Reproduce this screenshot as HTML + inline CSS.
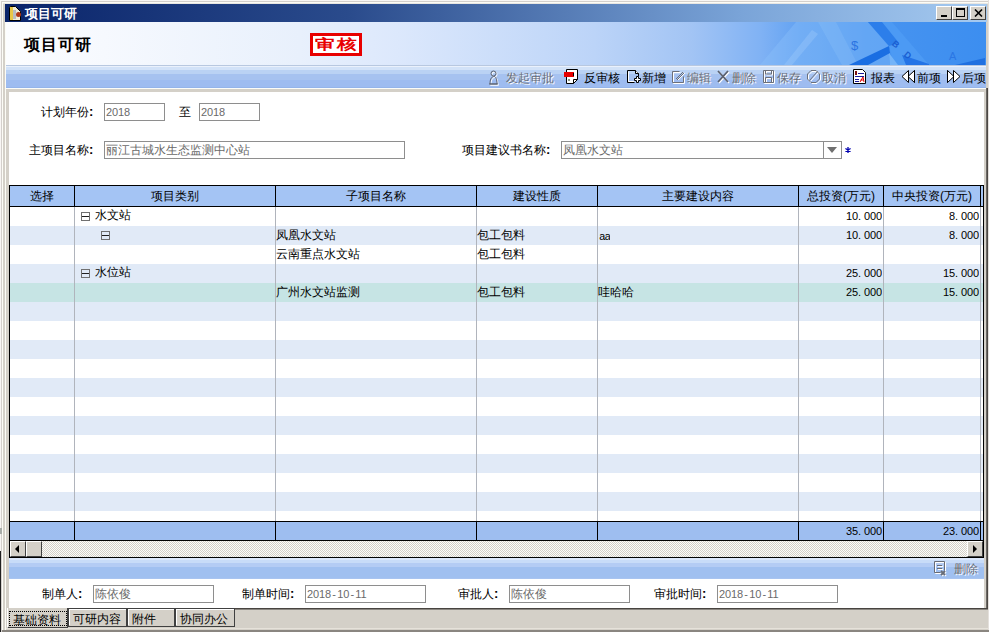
<!DOCTYPE html>
<html><head><meta charset="utf-8">
<style>
*{margin:0;padding:0;box-sizing:border-box}
html,body{width:989px;height:632px;overflow:hidden;background:#d4d0c8;font-family:"Liberation Sans",sans-serif;font-size:12px;color:#000}
.a{position:absolute;white-space:nowrap;overflow:hidden}
.t{position:absolute;white-space:nowrap;font-size:12px;line-height:12px;height:13px}
.num{font-family:"Liberation Mono",monospace;font-size:12px;letter-spacing:-1.2px}
.inp{position:absolute;border:1px solid #8e8e8e;background:#fff;color:#6a6a6a;overflow:hidden;white-space:nowrap}
#title{left:5px;top:4px;width:982px;height:18px;background:linear-gradient(to right,#0a246a 0%,#2a4b8c 35%,#7aa4d8 75%,#a6caf0 100%)}
#hdr{left:6px;top:22px;width:980px;height:43px;background:linear-gradient(to right,#fcfdff 0%,#f6f9fe 10%,#e8f0fc 30%,#dce8fc 40%,#bcd4f8 60%,#a2c4f4 70%,#80b2f4 77%,#62a2f2 81%,#4894f0 88%,#3c8ef0 100%)}
#tb{left:6px;top:65px;width:980px;height:23px;background:linear-gradient(to bottom,#b8c8e0 0 1px,#eaf1fc 1px 2px,#d2e2f8 2px 5px,#bad2f4 5px 9px,#a6c2f0 9px 15px,#9ebcf0 15px 22px,#94b4ea 22px 23px)}
#panel{left:9px;top:92px;width:975px;height:516px;background:#fff}
.nm{font-family:"Liberation Sans",sans-serif;font-size:11px;letter-spacing:-0.1px}
.nm i{font-style:normal;letter-spacing:2.9px}
.nm i.d{letter-spacing:1.2px;padding-left:1.2px}
.dis{color:#6a6e78;text-shadow:1px 1px 0 #fff}
</style></head><body>
<!-- window frame -->
<div class="a" style="left:0;top:0;width:989px;height:632px;background:#d4d0c8"></div>
<div class="a" style="left:0;top:0;width:989px;height:1px;background:#f8f6f4"></div>
<div class="a" style="left:0;top:0;width:1px;height:632px;background:#f8f6f4"></div>
<div class="a" style="left:1px;top:1px;width:988px;height:1px;background:#d4d0cc"></div>
<div class="a" style="left:1px;top:1px;width:1px;height:631px;background:#d4d0cc"></div>
<div class="a" style="left:2px;top:2px;width:987px;height:1px;background:#fcfcf6"></div>
<div class="a" style="left:2px;top:2px;width:1px;height:630px;background:#fcfcf6"></div>
<div class="a" style="left:3px;top:3px;width:985px;height:1px;background:#e8e6e2"></div>
<div class="a" style="left:5px;top:22px;width:1px;height:608px;background:#fcfcf6"></div>
<div class="a" style="left:0px;top:551px;width:1px;height:81px;background:#202020"></div><div class="a" style="left:0px;top:528px;width:2px;height:6px;background:#a8aca8"></div>
<div class="a" style="left:988px;top:0px;width:1px;height:632px;background:#e4e0dc"></div>
<div class="a" style="left:986px;top:88px;width:1px;height:522px;background:#6c6864"></div>
<div class="a" style="left:987px;top:88px;width:1px;height:522px;background:#4c4844"></div>

<!-- title bar -->
<div class="a" id="title"></div>
<svg class="a" style="left:8px;top:5px" width="14" height="16"><path d="M1.5 2.5q0-1 1-1h5l5 5v9h-11z" fill="#f0ecd8" stroke="#000"/><rect x="2" y="2" width="3" height="13" fill="#e8c848"/><rect x="5" y="5" width="3" height="9" fill="#b8bcc0"/><circle cx="10.5" cy="9.5" r="2.5" fill="#b03818"/></svg>
<div class="t" style="left:25px;top:7px;color:#fff;font-weight:900;font-size:13px;line-height:13px;height:14px">项目可研</div>
<!-- title buttons -->
<div class="a" style="left:936px;top:6px;width:16px;height:14px;background:#d4d0c8;border-top:1px solid #fff;border-left:1px solid #fff;border-right:1px solid #404040;border-bottom:1px solid #404040"><div class="a" style="left:4px;top:8px;width:6px;height:2px;background:#000"></div></div>
<div class="a" style="left:952px;top:6px;width:16px;height:14px;background:#d4d0c8;border-top:1px solid #fff;border-left:1px solid #fff;border-right:1px solid #404040;border-bottom:1px solid #404040"><div class="a" style="left:3px;top:1px;width:9px;height:9px;border:1px solid #000;border-top-width:2px"></div></div>
<div class="a" style="left:970px;top:6px;width:16px;height:14px;background:#d4d0c8;border-top:1px solid #fff;border-left:1px solid #fff;border-right:1px solid #404040;border-bottom:1px solid #404040">
 <svg class="a" style="left:3px;top:2px" width="9" height="8"><path d="M1 0.5L8 7.5M8 0.5L1 7.5" stroke="#000" stroke-width="1.6"/></svg></div>

<!-- header -->
<div class="a" id="hdr"></div>
<svg class="a" style="left:6px;top:22px" width="980" height="43">
<polygon points="754,43 790,0 862,0 883,24 884,43" fill="#8cc0fa" opacity="0.4"/>
<polygon points="778,43 806,8 812,12 786,43" fill="#a8d0fc" opacity="0.3"/>
<polygon points="812,0 830,0 852,43 836,43" fill="#a8d0fc" opacity="0.18"/>
<polygon points="862,0 886,0 923,43 888,43 883,24" fill="#4c9af4"/>
<polygon points="862,0 876,0 893,21 883,24" fill="#2c7eea"/>
<polygon points="896,33 923,42 923,43 900,43" fill="#2474e6"/>
<polygon points="843,43 883,24 884,31 862,43" fill="#1a6ee2"/>
<polygon points="883,31 884,43 892,43" fill="#74b4f8"/>
<polygon points="949,43 979,36 979,43" fill="#2070e0"/>
<text x="845" y="28" font-family="Liberation Sans" font-size="13" fill="#2a74e2">$</text>
<text x="887" y="26" font-family="Liberation Sans" font-size="9" font-weight="bold" fill="#1a5ed2" transform="rotate(40 891 22)">B</text>
<text x="899" y="37" font-family="Liberation Sans" font-size="9" font-weight="bold" fill="#1a5ed2" transform="rotate(40 903 33)">D</text>
<text x="943" y="38" font-family="Liberation Sans" font-size="11" fill="#2a76e4">A</text>
</svg>
<div class="t" style="left:24px;top:37px;font-size:16px;line-height:16px;height:17px;font-weight:bold;letter-spacing:1px">项目可研</div>
<div class="a" style="left:310px;top:33px;width:52px;height:23px;border:3px solid #e80000;background:#fff"></div>
<div class="a" style="left:315px;top:36px;width:14px;height:17px;color:#e80000;font-weight:bold;font-size:14px;line-height:17px;transform:scaleX(1.4);transform-origin:0 0;overflow:visible">审</div>
<div class="a" style="left:337px;top:36px;width:14px;height:17px;color:#e80000;font-weight:bold;font-size:14px;line-height:17px;transform:scaleX(1.4);transform-origin:0 0;overflow:visible">核</div>

<!-- toolbar -->
<div class="a" id="tb"></div>
<div class="a" style="left:6px;top:88px;width:980px;height:1px;background:#fcfcf8"></div>


<!-- toolbar items -->
<svg class="a" style="left:488px;top:70px" width="13" height="16"><g fill="none" stroke="#fff" stroke-width="1" transform="translate(1,1)"><circle cx="5.5" cy="3.5" r="2.5"/><path d="M2 14c0-4 1-7 3.5-7.5S9 10 9 14z"/><path d="M1 14h9"/></g><g fill="none" stroke="#5c6270" stroke-width="1"><circle cx="5.5" cy="3.5" r="2.5"/><path d="M2 14c0-4 1-7 3.5-7.5S9 10 9 14z"/><path d="M1 14h9"/></g></svg>
<div class="t dis" style="left:506px;top:72px">发起审批</div>
<svg class="a" style="left:563px;top:69px" width="16" height="16"><path d="M3.5 0.5h11v10l-4 4h-7z" fill="#fff" stroke="#000"/><path d="M10.5 14.5v-4h4" fill="none" stroke="#000"/><rect x="1" y="3" width="10" height="5" fill="#e60000"/><rect x="10" y="4" width="1" height="3" fill="#000"/><rect x="5" y="10" width="2" height="2" fill="#8a9a8a"/></svg>
<div class="t" style="left:584px;top:72px">反审核</div>
<svg class="a" style="left:626px;top:69px" width="16" height="16"><path d="M1.5 1.5h8l3 3v3M8.5 13.5h-7v-12" fill="none" stroke="#000"/><path d="M2.5 2.5v10h6" fill="none" stroke="#fff"/><path d="M9.5 1.5v3h3" fill="none" stroke="#000"/><path d="M10 2l2 2h-2z" fill="#fff"/><path d="M10.5 7.5h2v2h2v2h-2v2h-2v-2h-2v-2h2z" fill="#fff" stroke="#000"/></svg>
<div class="t" style="left:642px;top:72px">新增</div>
<svg class="a" style="left:671px;top:69px" width="16" height="16"><g transform="translate(1,1)" stroke="#fff" fill="none"><path d="M1.5 2.5h7M1.5 2.5v11h11v-6"/><path d="M6 10l7-7"/></g><g stroke="#6c707a" fill="none"><path d="M1.5 2.5h7M1.5 2.5v11h11v-6"/><path d="M5 10l7-7M6 11l7-7"/></g></svg>
<div class="t dis" style="left:687px;top:72px">编辑</div>
<svg class="a" style="left:717px;top:70px" width="14" height="14"><g transform="translate(1,1)" stroke="#fff" stroke-width="1.6"><path d="M1 1l10 11M11 1L1 12"/></g><g stroke="#5c6270" stroke-width="1.8"><path d="M1 1l10 11M11 1L1 12"/></g></svg>
<div class="t dis" style="left:732px;top:72px">删除</div>
<svg class="a" style="left:763px;top:70px" width="14" height="14"><g transform="translate(1,1)" stroke="#fff" fill="none"><path d="M0.5 0.5h10v12h-10z M2.5 7.5h6v5h-6z M2.5 1v3h6v-3"/></g><g stroke="#6c707a" fill="none"><path d="M0.5 0.5h10v12h-10z M2.5 7.5h6v5h-6z M2.5 1v3h6v-3"/></g></svg>
<div class="t dis" style="left:777px;top:72px">保存</div>
<svg class="a" style="left:807px;top:70px" width="15" height="14"><g transform="translate(1,1)" stroke="#fff" fill="none"><path d="M4 0.5h5l3.5 3.5v5l-3.5 3.5h-5L0.5 9v-5z M2.5 10.5l8-9"/></g><g stroke="#6c707a" fill="none"><path d="M4 0.5h5l3.5 3.5v5l-3.5 3.5h-5L0.5 9v-5z M2.5 10.5l8-9"/></g></svg>
<div class="t dis" style="left:822px;top:72px">取消</div>
<svg class="a" style="left:852px;top:69px" width="16" height="16"><path d="M1.5 0.5h9l3 3v11h-12z" fill="#fff" stroke="#000"/><rect x="3" y="2" width="2" height="4" fill="#7a1010"/><path d="M6 4.5h6M3 7.5h9M3 10.5h4M3 12.5h4" stroke="#1a1a9a" stroke-width="1.2"/><path d="M8 13l3-5 1 5M8.5 11h3" stroke="#e00000" fill="none"/></svg>
<div class="t" style="left:871px;top:72px">报表</div>
<svg class="a" style="left:901px;top:70px" width="16" height="13"><path d="M7.5 0.5L1 6.5l6.5 6zM13.5 0.5L7 6.5l6.5 6z" fill="#fff" stroke="#000"/><path d="M13.5 0.5v12" stroke="#000"/></svg>
<div class="t" style="left:917px;top:72px">前项</div>
<svg class="a" style="left:946px;top:70px" width="16" height="13"><path d="M1.5 0.5l6.5 6-6.5 6zM7.5 0.5l6.5 6-6.5 6z" fill="#fff" stroke="#000"/><path d="M1.5 0.5v12" stroke="#000"/></svg>
<div class="t" style="left:962px;top:72px">后项</div>

<!-- form panel -->
<div class="a" id="panel"></div>

<!-- form fields -->
<div class="t" style="left:41px;top:106px">计划年份<b style="font-size:13px">:</b></div>
<div class="inp nm" style="left:104px;top:103px;width:61px;height:18px;line-height:17px;padding-left:1px">2018</div>
<div class="t" style="left:179px;top:106px">至</div>
<div class="inp nm" style="left:199px;top:103px;width:61px;height:18px;line-height:17px;padding-left:1px">2018</div>

<div class="t" style="left:29px;top:144px">主项目名称<b style="font-size:13px">:</b></div>
<div class="inp" style="left:104px;top:141px;width:301px;height:18px;line-height:16px;padding-left:1px">丽江古城水生态监测中心站</div>
<div class="t" style="left:462px;top:144px">项目建议书名称<b style="font-size:13px">:</b></div>
<div class="inp" style="left:561px;top:141px;width:281px;height:18px;line-height:16px;padding-left:1px">凤凰水文站</div>
<div class="a" style="left:823px;top:141px;width:1px;height:18px;background:#8e8e8e"></div>
<svg class="a" style="left:827px;top:147px" width="11" height="7"><path d="M0 0h10L5 6z" fill="#707070"/></svg>
<svg class="a" style="left:845px;top:147px" width="6" height="6"><path d="M3 0v6M0.4 1.5l5.2 3M5.6 1.5L0.4 4.5" stroke="#0000b0" stroke-width="1.3"/></svg>

<div class="a" style="left:9px;top:185px;width:975px;height:1px;background:#000"></div>
<div class="a" style="left:10px;top:186px;width:973px;height:20px;background:#a4c4f4"></div>
<div class="a" style="left:9px;top:206px;width:975px;height:1px;background:#000"></div>
<div class="a" style="left:10px;top:226px;width:973px;height:19px;background:#e1eaf7"></div>
<div class="a" style="left:10px;top:264px;width:973px;height:19px;background:#e1eaf7"></div>
<div class="a" style="left:10px;top:283px;width:973px;height:19px;background:#c6e4e4"></div>
<div class="a" style="left:10px;top:302px;width:973px;height:19px;background:#e1eaf7"></div>
<div class="a" style="left:10px;top:340px;width:973px;height:19px;background:#e1eaf7"></div>
<div class="a" style="left:10px;top:378px;width:973px;height:19px;background:#e1eaf7"></div>
<div class="a" style="left:10px;top:416px;width:973px;height:19px;background:#e1eaf7"></div>
<div class="a" style="left:10px;top:454px;width:973px;height:19px;background:#e1eaf7"></div>
<div class="a" style="left:10px;top:492px;width:973px;height:19px;background:#e1eaf7"></div>
<div class="a" style="left:9px;top:521px;width:975px;height:1px;background:#000"></div>
<div class="a" style="left:10px;top:522px;width:973px;height:18px;background:#9ebef0"></div>
<div class="a" style="left:9px;top:540px;width:975px;height:1px;background:#000"></div>
<div class="a" style="left:9px;top:185px;width:1px;height:373px;background:#000"></div>
<div class="a" style="left:74px;top:186px;width:1px;height:20px;background:#000"></div>
<div class="a" style="left:74px;top:207px;width:1px;height:314px;background:#b0b4bc"></div>
<div class="a" style="left:74px;top:522px;width:1px;height:18px;background:#000"></div>
<div class="a" style="left:275px;top:186px;width:1px;height:20px;background:#000"></div>
<div class="a" style="left:275px;top:207px;width:1px;height:314px;background:#b0b4bc"></div>
<div class="a" style="left:275px;top:522px;width:1px;height:18px;background:#000"></div>
<div class="a" style="left:476px;top:186px;width:1px;height:20px;background:#000"></div>
<div class="a" style="left:476px;top:207px;width:1px;height:314px;background:#b0b4bc"></div>
<div class="a" style="left:476px;top:522px;width:1px;height:18px;background:#000"></div>
<div class="a" style="left:597px;top:186px;width:1px;height:20px;background:#000"></div>
<div class="a" style="left:597px;top:207px;width:1px;height:314px;background:#b0b4bc"></div>
<div class="a" style="left:597px;top:522px;width:1px;height:18px;background:#000"></div>
<div class="a" style="left:798px;top:186px;width:1px;height:20px;background:#000"></div>
<div class="a" style="left:798px;top:207px;width:1px;height:314px;background:#b0b4bc"></div>
<div class="a" style="left:798px;top:522px;width:1px;height:18px;background:#000"></div>
<div class="a" style="left:883px;top:186px;width:1px;height:20px;background:#000"></div>
<div class="a" style="left:883px;top:207px;width:1px;height:314px;background:#b0b4bc"></div>
<div class="a" style="left:883px;top:522px;width:1px;height:18px;background:#000"></div>
<div class="a" style="left:980px;top:186px;width:1px;height:20px;background:#000"></div>
<div class="a" style="left:980px;top:207px;width:1px;height:314px;background:#b0b4bc"></div>
<div class="a" style="left:980px;top:522px;width:1px;height:18px;background:#000"></div>
<div class="a" style="left:983px;top:185px;width:1px;height:373px;background:#000"></div>
<div class="t" style="left:10px;top:190px;width:64px;text-align:center">选择</div>
<div class="t" style="left:75px;top:190px;width:200px;text-align:center">项目类别</div>
<div class="t" style="left:276px;top:190px;width:200px;text-align:center">子项目名称</div>
<div class="t" style="left:477px;top:190px;width:120px;text-align:center">建设性质</div>
<div class="t" style="left:598px;top:190px;width:200px;text-align:center">主要建设内容</div>
<div class="t" style="left:799px;top:190px;width:84px;text-align:center">总投资(万元)</div>
<div class="t" style="left:884px;top:190px;width:96px;text-align:center">中央投资(万元)</div>

<!-- cell texts -->
<div class="a" style="left:81px;top:212px;width:9px;height:9px;border:1px solid #707070"><div class="a" style="left:0px;top:3px;width:7px;height:1px;background:#202020"></div></div>
<div class="t" style="left:95px;top:209px">水文站</div>
<div class="a" style="left:101px;top:231px;width:9px;height:9px;border:1px solid #707070"><div class="a" style="left:0px;top:3px;width:7px;height:1px;background:#202020"></div></div>
<div class="t" style="left:276px;top:229px">凤凰水文站</div>
<div class="t" style="left:477px;top:229px">包工包料</div>
<div class="num a" style="left:599px;top:231px;font-size:11px;line-height:12px;letter-spacing:-1px">aa</div>
<div class="nm a" style="left:816px;top:210px;width:66px;text-align:right;line-height:12px">10<i>.</i>000</div>
<div class="nm a" style="left:913px;top:210px;width:66px;text-align:right;line-height:12px">8<i>.</i>000</div>
<div class="nm a" style="left:816px;top:229px;width:66px;text-align:right;line-height:12px">10<i>.</i>000</div>
<div class="nm a" style="left:913px;top:229px;width:66px;text-align:right;line-height:12px">8<i>.</i>000</div>
<div class="t" style="left:276px;top:248px">云南重点水文站</div>
<div class="t" style="left:477px;top:248px">包工包料</div>
<div class="a" style="left:81px;top:269px;width:9px;height:9px;border:1px solid #707070"><div class="a" style="left:0px;top:3px;width:7px;height:1px;background:#202020"></div></div>
<div class="t" style="left:95px;top:266px">水位站</div>
<div class="nm a" style="left:816px;top:267px;width:66px;text-align:right;line-height:12px">25<i>.</i>000</div>
<div class="nm a" style="left:913px;top:267px;width:66px;text-align:right;line-height:12px">15<i>.</i>000</div>
<div class="t" style="left:276px;top:286px">广州水文站监测</div>
<div class="t" style="left:477px;top:286px">包工包料</div>
<div class="t" style="left:598px;top:286px">哇哈哈</div>
<div class="nm a" style="left:816px;top:286px;width:66px;text-align:right;line-height:12px">25<i>.</i>000</div>
<div class="nm a" style="left:913px;top:286px;width:66px;text-align:right;line-height:12px">15<i>.</i>000</div>
<div class="nm a" style="left:816px;top:525px;width:66px;text-align:right;line-height:12px">35<i>.</i>000</div>
<div class="nm a" style="left:913px;top:525px;width:66px;text-align:right;line-height:12px">23<i>.</i>000</div>

<!-- h scrollbar -->
<div class="a" style="left:10px;top:541px;width:973px;height:16px;background:repeating-conic-gradient(#d4d0c8 0 25%,#fcfcfa 0 50%) 0 0/2px 2px"></div>
<div class="a" style="left:10px;top:541px;width:16px;height:16px;background:#d4d0c8;border-top:1px solid #fff;border-left:1px solid #fff;border-right:1px solid #404040;border-bottom:1px solid #404040"><svg class="a" style="left:4px;top:3px" width="5" height="9"><path d="M4 0v8L0 4z" fill="#000"/></svg></div>
<div class="a" style="left:26px;top:541px;width:16px;height:16px;background:#d4d0c8;border-top:1px solid #fff;border-left:1px solid #fff;border-right:1px solid #404040;border-bottom:1px solid #404040"></div>
<div class="a" style="left:967px;top:541px;width:16px;height:16px;background:#d4d0c8;border-top:1px solid #fff;border-left:1px solid #fff;border-right:1px solid #404040;border-bottom:1px solid #404040"><svg class="a" style="left:5px;top:3px" width="5" height="9"><path d="M0 0v8L4 4z" fill="#000"/></svg></div>
<div class="a" style="left:9px;top:557px;width:975px;height:1px;background:#000"></div>

<!-- bottom toolbar -->
<div class="a" style="left:9px;top:558px;width:975px;height:21px;background:linear-gradient(to bottom,#dce8fc 0 2px,#c8dcf8 2px 5px,#b4ccf4 5px 9px,#a0c0f0 9px 20px,#a8c4f0 20px 21px)"></div>
<svg class="a" style="left:933px;top:560px" width="16" height="18"><g transform="translate(1,1)" stroke="#fff" fill="none"><path d="M1.5 1.5h10v9M1.5 1.5v11h6M4 5.5h5M4 8.5h5"/><path d="M8 11l4 4M12 11l-4 4" stroke-width="1.6"/></g><g stroke="#686c76" fill="none"><path d="M1.5 1.5h10v9M1.5 1.5v11h6M4 5.5h5M4 8.5h5"/><path d="M8 11l4 4M12 11l-4 4" stroke-width="1.8"/></g></svg>
<div class="t dis" style="left:954px;top:563px">删除</div>

<!-- footer form -->
<div class="a" style="left:9px;top:579px;width:975px;height:29px;background:#fff"></div>
<div class="t" style="left:42px;top:588px">制单人<b style="font-size:13px">:</b></div>
<div class="inp" style="left:93px;top:585px;width:121px;height:18px;line-height:16px;padding-left:1px">陈依俊</div>
<div class="t" style="left:242px;top:588px">制单时间<b style="font-size:13px">:</b></div>
<div class="inp nm" style="left:305px;top:585px;width:121px;height:18px;line-height:16px;padding-left:1px">2018<i class="d">-</i>10<i class="d">-</i>11</div>
<div class="t" style="left:458px;top:588px">审批人<b style="font-size:13px">:</b></div>
<div class="inp" style="left:509px;top:585px;width:121px;height:18px;line-height:16px;padding-left:1px">陈依俊</div>
<div class="t" style="left:654px;top:588px">审批时间<b style="font-size:13px">:</b></div>
<div class="inp nm" style="left:717px;top:585px;width:121px;height:18px;line-height:16px;padding-left:1px">2018<i class="d">-</i>10<i class="d">-</i>11</div>

<!-- tabs -->
<div class="a" style="left:9px;top:608px;width:979px;height:1px;background:#484440"></div><div class="a" style="left:9px;top:609px;width:979px;height:1px;background:#8a8680"></div>
<div class="a" style="left:68px;top:608px;width:59px;height:19px;background:#d4d0c8;border:1px solid #404040"><div class="a" style="left:0;top:0;width:57px;height:1px;background:#fff"></div><div class="a" style="left:0;top:0;width:1px;height:16px;background:#fff"></div></div>
<div class="t" style="left:73px;top:613px">可研内容</div>
<div class="a" style="left:127px;top:608px;width:48px;height:19px;background:#d4d0c8;border:1px solid #404040"><div class="a" style="left:0;top:0;width:46px;height:1px;background:#fff"></div><div class="a" style="left:0;top:0;width:1px;height:16px;background:#fff"></div></div>
<div class="t" style="left:132px;top:613px">附件</div>
<div class="a" style="left:175px;top:608px;width:60px;height:19px;background:#d4d0c8;border:1px solid #404040"><div class="a" style="left:0;top:0;width:58px;height:1px;background:#fff"></div><div class="a" style="left:0;top:0;width:1px;height:16px;background:#fff"></div></div>
<div class="t" style="left:180px;top:613px">协同办公</div>
<div class="a" style="left:7px;top:608px;width:61px;height:21px;background:#d4d0c8;border-left:1px solid #fff;border-right:1px solid #404040;border-bottom:2px solid #404040"></div>
<div class="a" style="left:9px;top:611px;width:58px;height:15px;border:1px dotted #000"></div>
<div class="t" style="left:13px;top:614px">基础资料</div>
<div class="a" style="left:6px;top:628px;width:982px;height:1px;background:#e6e2da"></div>
<div class="a" style="left:2px;top:630px;width:987px;height:2px;background:#8a8680"></div>
</body></html>
